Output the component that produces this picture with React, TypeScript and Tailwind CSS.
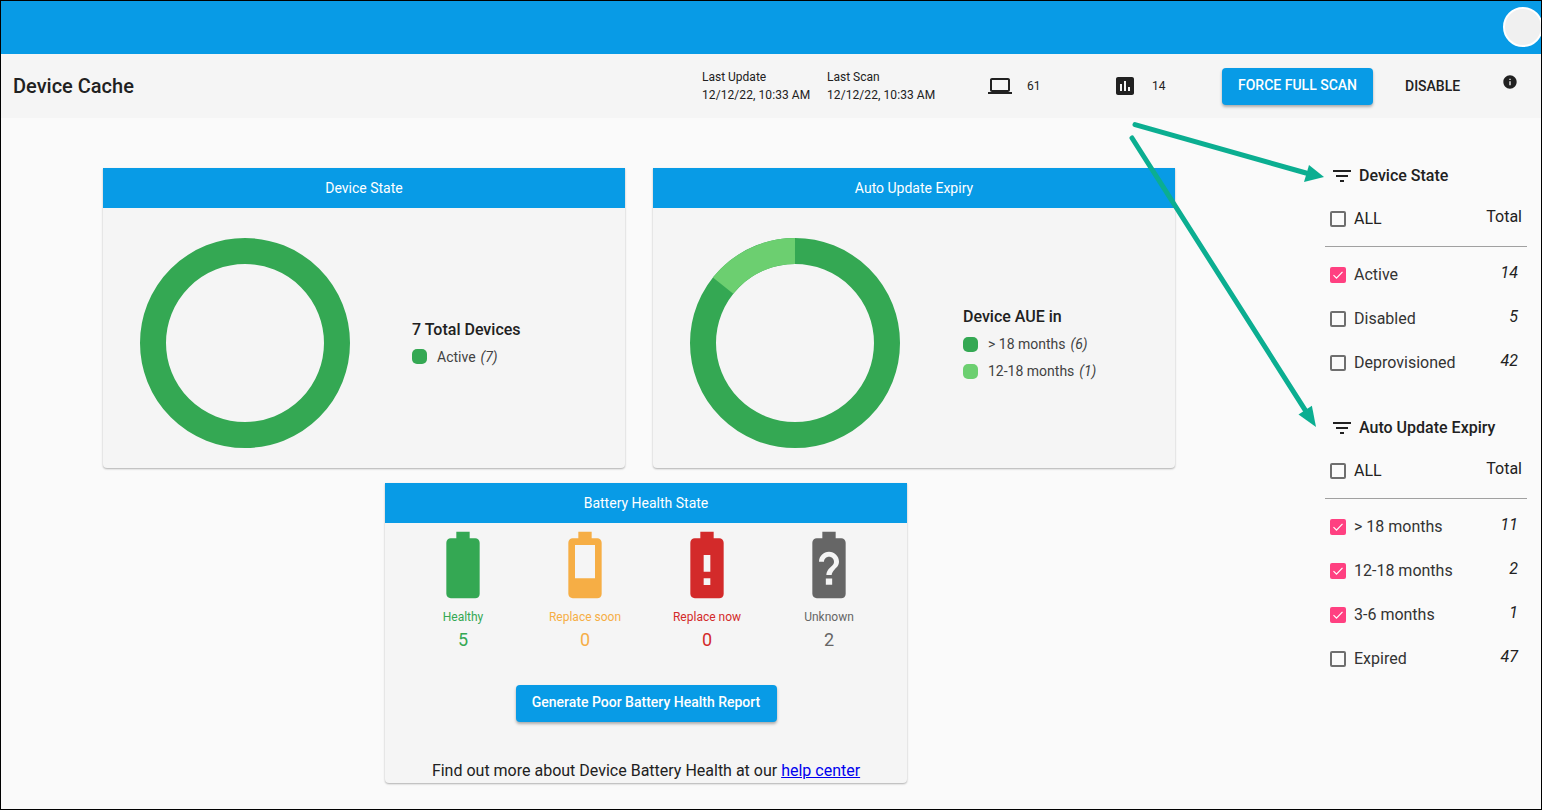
const Ic = ({ d, size, className }: { d: string; size: number; className?: string }) => (
  <svg viewBox="0 0 24 24" width={size} height={size} className={className} fill="currentColor" fillRule="evenodd">
    <path d={d} />
  </svg>
);

const batteryBase =
  'M15.67 4H14V2h-4v2H8.33C7.6 4 7 4.6 7 5.33v15.33C7 21.4 7.6 22 8.33 22h7.33c.74 0 1.34-.6 1.34-1.33V5.33C17 4.6 16.4 4 15.67 4z';

const batteries = [
  { label: 'Healthy', value: 5, d: batteryBase, color: 'text-[#34a853]' },
  { label: 'Replace soon', value: 0, d: batteryBase + 'M15 6H9v10h6V6z', color: 'text-[#f6ae45]' },
  { label: 'Replace now', value: 0, d: batteryBase + 'M13 18h-2v-2h2v2zm0-4h-2V9h2v5z', color: 'text-[#d32a2a]' },
  {
    label: 'Unknown',
    value: 2,
    d:
      batteryBase +
      'm-2.72 13.95h-1.9v-1.9h1.9v1.9zm1.35-5.26s-.38.42-.67.71c-.48.48-.83 1.15-.83 1.6h-1.6c0-.83.46-1.52.93-2l.93-.94c.27-.27.44-.65.44-1.06 0-.83-.67-1.5-1.5-1.5s-1.5.67-1.5 1.5H9c0-1.66 1.34-3 3-3s3 1.34 3 3c0 .66-.27 1.26-.7 1.69z',
    color: 'text-[#666666]',
  },
];

const filterGroups = [
  {
    title: 'Device State',
    rows: [
      { label: 'Active', total: 14, checked: true },
      { label: 'Disabled', total: 5, checked: false },
      { label: 'Deprovisioned', total: 42, checked: false },
    ],
  },
  {
    title: 'Auto Update Expiry',
    rows: [
      { label: '> 18 months', total: 11, checked: true },
      { label: '12-18 months', total: 2, checked: true },
      { label: '3-6 months', total: 1, checked: true },
      { label: 'Expired', total: 47, checked: false },
    ],
  },
];

function Checkbox({ checked }: { checked: boolean }) {
  if (checked) {
    return (
      <span className="flex h-4 w-4 shrink-0 items-center justify-center rounded-[2px] bg-[#ff4081]">
        <svg viewBox="0 0 16 16" width="16" height="16" fill="none" stroke="white" strokeWidth="1.2">
          <path d="M3.5 8.2l3 3 6-6.4" />
        </svg>
      </span>
    );
  }
  return <span className="h-4 w-4 shrink-0 rounded-[2px] border-2 border-[#6e6e6e]" />;
}

function Card({ title, children }: { title: string; children: React.ReactNode }) {
  return (
    <div className="w-[522px] h-[300px] flex flex-col rounded-b-[4px] bg-[#f5f5f5] shadow-[0_1px_2px_rgba(0,0,0,0.3)]">
      <div className="h-10 shrink-0 flex items-center justify-center bg-[#089be6] text-sm text-white">{title}</div>
      {children}
    </div>
  );
}

function Donut({ light }: { light?: boolean }) {
  return (
    <svg viewBox="0 0 210 210" width="210" height="210" fill="none" strokeWidth="26" className="shrink-0">
      <circle cx="105" cy="105" r="92" stroke="#34a853" />
      {light && <path d="M105 13A92 92 0 0 0 33.1 47.6" stroke="#6ccf70" />}
    </svg>
  );
}

function LegendRow({ color, label, count }: { color: string; label: string; count: number }) {
  return (
    <div className="h-[27px] flex items-center gap-2.5 text-sm text-[#424242]">
      <span className={`h-[15px] w-[15px] rounded-[5px] ${color}`} />
      <span>
        {label} <i className="ml-[1.5px]">({count})</i>
      </span>
    </div>
  );
}

export default function App() {
  return (
    <div className="relative w-[1542px] h-[810px] overflow-hidden border border-black bg-[#fafafa] font-['Roboto',sans-serif] text-[#212121]">
      <div className="h-[53px] flex justify-end overflow-hidden bg-[#089be6] pt-1.5">
        <div className="h-10 w-10 shrink-0 -mr-[2px] rounded-full border-2 border-white bg-[#f0f0f0]" />
      </div>

      <div className="h-16 flex items-center bg-[#f5f5f5] pl-3">
        <h1 className="w-[689px] text-xl font-medium">Device Cache</h1>
        <div className="w-[125px] text-xs leading-[18px]">
          <div>Last Update</div>
          <div className="tracking-[0.08px]">12/12/22, 10:33 AM</div>
        </div>
        <div className="w-[161px] text-xs leading-[18px]">
          <div>Last Scan</div>
          <div className="tracking-[0.08px]">12/12/22, 10:33 AM</div>
        </div>
        <div className="w-[125px] flex items-center gap-[15px] text-xs">
          <Ic size={24} d="M20 18c1.1 0 1.99-.9 1.99-2L22 6c0-1.1-.9-2-2-2H4c-1.1 0-2 .9-2 2v10c0 1.1.9 2 2 2H0v2h24v-2h-4zM4 6h16v10H4V6z" />
          <span>61</span>
        </div>
        <div className="w-[109px] flex items-center gap-[15px] text-xs">
          <Ic size={24} d="M19 3H5c-1.1 0-2 .9-2 2v14c0 1.1.9 2 2 2h14c1.1 0 2-.9 2-2V5c0-1.1-.9-2-2-2zM9 17H7v-7h2v7zm4 0h-2V7h2v10zm4 0h-2v-4h2v4z" />
          <span>14</span>
        </div>
        <button className="h-[37px] w-[151px] rounded-[4px] bg-[#089be6] pb-0.5 text-sm font-medium uppercase text-white shadow-[0_2px_3px_rgba(0,0,0,0.3)]">
          Force Full Scan
        </button>
        <span className="ml-8 w-[97px] text-sm font-medium uppercase">Disable</span>
        <Ic size={16} className="mb-2" d="M12 2C6.48 2 2 6.48 2 12s4.48 10 10 10 10-4.48 10-10S17.52 2 12 2zm1 15h-2v-6h2v6zm0-8h-2V7h2v2z" />
      </div>

      <div className="flex">
        <div className="w-[1324px] shrink-0 pl-[102px] pt-[50px]">
          <div className="flex gap-7">
            <Card title="Device State">
              <div className="flex items-center pl-[37px] pt-[30px] pb-5">
                <Donut />
                <div className="ml-[62px] pt-[2px]">
                  <div className="h-6 leading-6 font-medium">7 Total Devices</div>
                  <div className="mt-[1px]">
                    <LegendRow color="bg-[#34a853]" label="Active" count={7} />
                  </div>
                </div>
              </div>
            </Card>
            <Card title="Auto Update Expiry">
              <div className="flex items-center pl-[37px] pt-[30px] pb-5">
                <Donut light />
                <div className="ml-[63px] pt-[3px]">
                  <div className="h-6 leading-6 font-medium">Device AUE in</div>
                  <div className="mt-[2px]">
                    <LegendRow color="bg-[#34a853]" label="> 18 months" count={6} />
                    <LegendRow color="bg-[#6ccf70]" label="12-18 months" count={1} />
                  </div>
                </div>
              </div>
            </Card>
          </div>

          <div className="ml-[282px] mt-[15px]">
            <Card title="Battery Health State">
              <div className="flex flex-col items-center pt-0.5">
                <div className="grid w-full grid-cols-4 px-[17px]">
                  {batteries.map((b) => (
                    <div key={b.label} className={`flex flex-col items-center ${b.color}`}>
                      <Ic size={80} d={b.d} />
                      <div className="mt-1 text-xs leading-4">{b.label}</div>
                      <div className="mt-[3px] text-lg leading-6">{b.value}</div>
                    </div>
                  ))}
                </div>
                <button className="mt-[33px] h-[37px] w-[261px] rounded-[4px] bg-[#089be6] pb-1 text-sm font-medium text-white shadow-[0_2px_3px_rgba(0,0,0,0.3)]">
                  Generate Poor Battery Health Report
                </button>
                <p className="mt-[37px] leading-6">
                  Find out more about Device Battery Health at our{' '}
                  <a href="#" className="text-[#0000ee] underline">
                    help center
                  </a>
                </p>
              </div>
            </Card>
          </div>
        </div>

        <aside className="w-[202px] shrink-0 pt-[46px] flex flex-col gap-[31px]">
          {filterGroups.map((g) => (
            <div key={g.title}>
              <div className="h-6 flex items-center gap-[5px] pl-[5px] font-medium">
                <Ic size={24} d="M10 18h4v-2h-4v2zM3 6v2h18V6H3zm3 7h12v-2H6v2z" />
                {g.title}
              </div>
              <div className="mt-[9px] h-[44px] flex items-center pl-[5px] pr-[5px]">
                <Checkbox checked={false} />
                <span className="ml-2">ALL</span>
                <span className="ml-auto pb-1">Total</span>
              </div>
              <div className="mt-[5px] mb-1.5 border-t border-[#a0a0a0]" />
              {g.rows.map((r) => (
                <div key={r.label} className="h-[44px] flex items-center pl-[5px] pr-[9px]">
                  <Checkbox checked={r.checked} />
                  <span className="ml-2 text-[#333333]">{r.label}</span>
                  <i className="ml-auto pb-1">{r.total}</i>
                </div>
              ))}
            </div>
          ))}
        </aside>
      </div>

      {/* annotation arrows on top of the screenshot */}
      <svg className="absolute -left-px -top-px pointer-events-none" width="1543" height="811" fill="#0bae91" stroke="none">
        <path d="M1135 124.6L1306 173" stroke="#0bae91" strokeWidth="5" strokeLinecap="round" />
        <polygon points="1324,177 1304,182 1309,165" />
        <path d="M1132 138L1305.2 410.1" stroke="#0bae91" strokeWidth="5" strokeLinecap="round" />
        <polygon points="1316,427 1298.5,414.4 1311.9,405.8" />
      </svg>
    </div>
  );
}
